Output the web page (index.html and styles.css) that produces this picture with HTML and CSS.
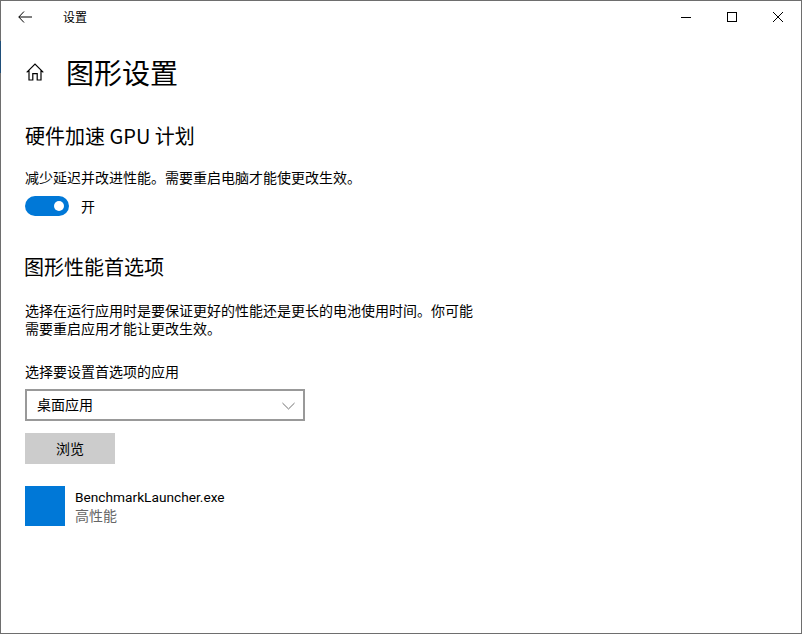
FILE: index.html
```html
<!DOCTYPE html>
<html lang="zh-CN">
<head>
    <meta charset="UTF-8">
    <title>设置</title>
    <link rel="stylesheet" href="styles.css">
</head>
<body>
    <div class="window">
        <div class="edge-strip"></div>
        <div class="titlebar">
            <svg class="back-icon" viewBox="0 0 14 12">
                <path d="M6 .5L.8 6 6 11.5M.8 6H14"/>
            </svg>
            <span class="title-text">设置</span>
            <div class="window-controls">
                <svg viewBox="0 0 10 10"><path d="M0 5.5H10"/></svg>
                <svg viewBox="0 0 10 10"><rect x=".5" y=".5" width="9" height="9"/></svg>
                <svg viewBox="0 0 10 10"><path d="M0 0L10 10M10 0L0 10"/></svg>
            </div>
        </div>

        <div class="content">
            <div class="page-header">
                <svg class="home-icon" viewBox="0 0 18 18">
                    <path d="M.7 9.4L9 1l8.3 8.4M3 7.4V17h3.8v-6.4h4.4V17H15V7.4"/>
                </svg>
                <h1>图形设置</h1>
            </div>

            <h2 class="first-heading">硬件加速 GPU 计划</h2>
            <p class="desc">减少延迟并改进性能。需要重启电脑才能使更改生效。</p>
            <div class="toggle-row">
                <div class="toggle"><span class="knob"></span></div>
                <span>开</span>
            </div>

            <h2 class="second-heading">图形性能首选项</h2>
            <p class="desc wrap">选择在运行应用时是要保证更好的性能还是更长的电池使用时间。你可能需要重启应用才能让更改生效。</p>

            <div class="field-label">选择要设置首选项的应用</div>
            <div class="select">
                <span class="select-value">桌面应用</span>
                <svg class="chevron" viewBox="0 0 14 8"><path d="M.5 .8L7 7.2 13.5 .8"/></svg>
            </div>
            <button class="browse">浏览</button>

            <div class="app-item">
                <div class="app-icon"></div>
                <div class="app-info">
                    <div class="app-name">BenchmarkLauncher.exe</div>
                    <div class="app-pref">高性能</div>
                </div>
            </div>
        </div>
    </div>
</body>
</html>
```

FILE: styles.css
```css
html, body {
    margin: 0;
    height: 100%;
}
body {
    font-family: "Noto Sans CJK SC", "Open Sans", sans-serif;
    font-size: 14px;
    line-height: 20px;
    color: #000;
    background: #fff;
}
svg {
    fill: none;
    stroke: #000;
    stroke-width: 1;
}
.window {
    position: relative;
    box-sizing: border-box;
    height: 634px;
    border: 1px solid #6e6e6e;
}
/* bit of the window behind showing through the left border */
.edge-strip {
    position: absolute;
    left: -1px;
    top: 40px;
    width: 1px;
    height: 32px;
    background: #1f4e79;
}
.titlebar {
    display: flex;
    align-items: center;
    height: 31px;
}
.back-icon {
    width: 14px;
    height: 12px;
    margin-left: 17px;
    flex: none;
}
.title-text {
    margin-left: 31px;
    font-size: 12px;
}
.window-controls {
    display: flex;
    gap: 36px;
    margin-left: auto;
    margin-right: 18px;
}
.window-controls svg {
    width: 10px;
    height: 10px;
}
.content {
    padding: 0 24px;
}
.page-header {
    display: flex;
    align-items: center;
    height: 40px;
    margin-top: 20px;
}
.home-icon {
    width: 18px;
    height: 18px;
    margin: 0 0 0 1px;
    flex: none;
    stroke-width: 1.2;
}
h1 {
    margin: 0 0 0 22px;
    font-size: 28px;
    line-height: 40px;
    font-weight: 400;
}
h2 {
    margin: 0;
    font-size: 20px;
    line-height: 28px;
    font-weight: 400;
}
.first-heading {
    margin-top: 30px;
}
.second-heading {
    margin-top: 37px;
    margin-left: -1px;
}
.desc {
    margin: 17px 0 0;
    font-size: 14px;
}
.wrap {
    width: 450px;
    margin-top: 20px;
    line-height: 18px;
}
.toggle-row {
    display: flex;
    align-items: center;
    gap: 12px;
    height: 20px;
    margin-top: 9px;
}
.toggle {
    display: flex;
    align-items: center;
    justify-content: flex-end;
    width: 44px;
    height: 20px;
    padding-right: 5px;
    box-sizing: border-box;
    border-radius: 10px;
    background: #0078d7;
}
.knob {
    width: 10px;
    height: 10px;
    border-radius: 50%;
    background: #fff;
}
.field-label {
    margin-top: 24px;
}
.select {
    display: flex;
    align-items: center;
    justify-content: space-between;
    box-sizing: border-box;
    width: 280px;
    height: 32px;
    margin-top: 8px;
    padding: 0 8px 0 10px;
    border: 2px solid #999;
}
.select-value {
    margin-top: -2px;
}
.chevron {
    width: 13px;
    height: 8px;
    margin-top: 2px;
    stroke: #666;
}
.browse {
    display: block;
    width: 90px;
    height: 31px;
    margin-top: 12px;
    padding: 0 0 2px;
    border: 0;
    background: #ccc;
    color: #000;
    font: inherit;
}
.app-item {
    display: flex;
    gap: 10px;
    margin-top: 22px;
}
.app-icon {
    width: 40px;
    height: 40px;
    background: #0078d7;
}
.app-name {
    padding-top: 1px;
    font-family: Roboto, "Noto Sans CJK SC", sans-serif;
    font-size: 13.7px;
}
.app-pref {
    margin-top: -2px;
    color: #666;
}
```
